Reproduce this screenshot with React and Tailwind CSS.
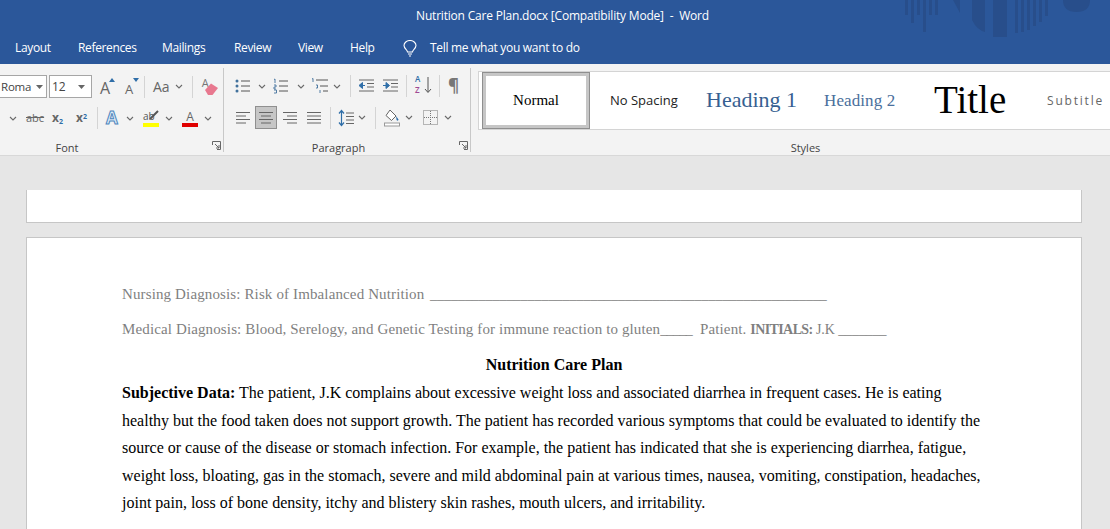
import React from "react";

const ui = { fontFamily: '"Open Sans", "Noto Sans", sans-serif' };
const cambria = { fontFamily: '"Liberation Serif", serif' };

const tabs = [
  ["Layout", "w-[63px]"],
  ["References", "w-[84px]"],
  ["Mailings", "w-[72px]"],
  ["Review", "w-[64px]"],
  ["View", "w-[52px]"],
  ["Help", "w-[53px]"],
];

const Chevron = ({ className = "" }) => (
  <svg width="8" height="5" viewBox="0 0 8 5" className={className}>
    <path d="M1 1l3 3 3-3" fill="none" stroke="#6a6a6a" strokeWidth="1.1" />
  </svg>
);

const Sep = ({ className = "" }) => <div className={`w-px h-[22px] bg-[#d4d4d4] ${className}`} />;

const Launcher = () => (
  <svg width="9" height="9" viewBox="0 0 9 9" className="absolute right-[3px] bottom-[2px]">
    <path d="M.5 4V.5H8.500V8.500H5M3 3l4 4M7 4v3H4" fill="none" stroke="#666" strokeWidth="1" />
  </svg>
);

const Lines = ({ rows }) => (
  <svg width="16" height="14" viewBox="0 0 16 14">
    {rows.map(([x1, x2], i) => (
      <path key={i} d={`M${x1} ${1.5 + i * 3.5}H${x2}`} stroke="#666" strokeWidth="1" />
    ))}
  </svg>
);

const BulletList = () => (
  <svg width="16" height="16" viewBox="0 0 16 16">
    <g fill="#41719c"><circle cx="2" cy="3" r="1.500" /><circle cx="2" cy="8" r="1.500" /><circle cx="2" cy="13" r="1.500" /></g>
    <path d="M6 3h9M6 8h9M6 13h9" stroke="#555" />
  </svg>
);

const NumberList = () => (
  <svg width="16" height="16" viewBox="0 0 16 16">
    <path d="M1 1.500l1-.5v4M1 7h2v2H1v2h2M1 12h2.500v3H1" fill="none" stroke="#41719c" strokeWidth=".9" />
    <path d="M6 3h9M6 8h9M6 13h9" stroke="#555" />
  </svg>
);

const MultiLevel = () => (
  <svg width="18" height="16" viewBox="0 0 18 16">
    <path d="M1 1l1-.5V4M5 7h1.500v3H5M9 12v3" fill="none" stroke="#41719c" strokeWidth=".9" />
    <path d="M5 2h12M9 8h8M12 13h5" stroke="#555" />
  </svg>
);

const Indent = ({ flip }) => (
  <svg width="17" height="14" viewBox="0 0 17 14">
    <path d="M1 1h15M9 4.500h7M9 8h7M1 12h15" stroke="#666" />
    {flip ? (
      <path d="M1 6.500h5M4 3.500l3.500 3-3.500 3z" fill="#2f6ea8" stroke="#2f6ea8" />
    ) : (
      <path d="M7 6.500H3M4.500 3.500L1 6.500l3.500 3z" fill="#2f6ea8" stroke="#2f6ea8" />
    )}
  </svg>
);

const Sort = () => (
  <div className="relative w-[17px] h-[18px]">
    <span style={ui} className="absolute left-0 -top-[2px] text-[8px] leading-[8px] font-semibold text-[#2f6ea8]">A</span>
    <span style={ui} className="absolute left-0 top-[9px] text-[8px] leading-[8px] font-semibold text-[#a04a94]">Z</span>
    <svg width="8" height="17" viewBox="0 0 8 17" className="absolute right-0 top-0">
      <path d="M4 0v15M1 12l3 3.500L7 12" fill="none" stroke="#555" />
    </svg>
  </div>
);

const SpacingIcon = () => (
  <svg width="16" height="18" viewBox="0 0 16 18">
    <path d="M3.500 2v14M1 4.500L3.500 1.500 6 4.500M1 13.500l2.500 3 2.500-3" fill="none" stroke="#2f6ea8" strokeWidth="1.200" />
    <path d="M8 4h8M8 7.500h8M8 11h8M8 14.500h8" stroke="#666" />
  </svg>
);

const Shading = () => (
  <svg width="16" height="18" viewBox="0 0 16 18">
    <path d="M6 1l6 6-4.500 4.500L2 6.500z" fill="#fff" stroke="#666" />
    <path d="M12 7l2.500 3.500c0 1.500-2 1.500-2 0z" fill="#2f6ea8" />
    <rect x=".5" y="14" width="15" height="3" fill="#fff" stroke="#999" />
  </svg>
);

const Borders = () => (
  <svg width="15" height="15" viewBox="0 0 15 15">
    <rect x=".5" y=".5" width="14" height="14" fill="none" stroke="#777" strokeDasharray="1 1" />
    <path d="M7.500 1v13M1 7.500h13" stroke="#777" strokeDasharray="1 1" />
  </svg>
);

const Eraser = () => (
  <div className="relative w-[15px] h-[16px]">
    <span style={ui} className="absolute left-0 -top-[3px] text-[11px] leading-[14px] text-[#777]">A</span>
    <svg width="14" height="12" viewBox="0 0 14 12" className="absolute -right-[1px] bottom-0">
      <path d="M1 7l6-6.500L14 5 8.500 12H4z" fill="#e8788f" />
    </svg>
  </div>
);

const Ribbon = () => (
  <div className="flex h-[92px] shrink-0 bg-[#f3f3f3] border-b border-[#d8d8d8]">
    {/* font group */}
    <div className="relative w-[224px] shrink-0 h-[88px] pt-[11px]" style={ui}>
      <div className="flex items-center h-[23px]">
        <div className="flex items-center justify-between w-[47px] h-[23px] bg-white border border-l-0 border-[#a6a6a6] pl-[1px] pr-[3px] text-[11.500px] tracking-[-0.2px] text-[#444]">
          Roma
          <svg width="7" height="4" viewBox="0 0 7 4" className="shrink-0"><path d="M0 0h7L3.500 4z" fill="#666" /></svg>
        </div>
        <div className="flex items-center justify-between w-[43px] h-[23px] ml-[2px] bg-white border border-[#a6a6a6] pl-[2px] pr-[6px] text-[12px] text-[#444]">
          12
          <svg width="7" height="4" viewBox="0 0 7 4"><path d="M0 0h7L3.500 4z" fill="#666" /></svg>
        </div>
        <div className="relative w-[14px] h-[18px] ml-[8px] text-[16px] leading-[20px] text-[#666]">
          A
          <svg width="6" height="4" viewBox="0 0 6 4" className="absolute -right-[1px] top-0"><path d="M0 4h6L3 0z" fill="#2f6ea8" /></svg>
        </div>
        <div className="relative w-[13px] h-[18px] ml-[11px] text-[13px] leading-[22px] text-[#666]">
          A
          <svg width="6" height="4" viewBox="0 0 6 4" className="absolute -right-[1px] top-0"><path d="M0 0h6L3 4z" fill="#2f6ea8" /></svg>
        </div>
        <Sep className="ml-[6px]" />
        <span className="ml-[8px] text-[14px] text-[#666]">Aa</span>
        <Chevron className="ml-[5px]" />
        <Sep className="ml-[9px]" />
        <div className="ml-[9px]"><Eraser /></div>
      </div>
      <div className="flex items-center h-[22px] mt-[9px]">
        <Chevron className="ml-[9px]" />
        <span className="ml-[9px] w-[17px] text-[11px] text-[#666] line-through">abc</span>
        <span className="ml-[9px] w-[13px] text-[12px] font-bold text-[#666]">x<sub className="text-[7px] text-[#2f6ea8]">2</sub></span>
        <span className="ml-[11px] w-[13px] text-[12px] font-bold text-[#666]">x<sup className="text-[7px] text-[#2f6ea8]">2</sup></span>
        <Sep className="ml-[8px]" />
        <span className="ml-[8px] w-[15px] text-[17px] font-bold leading-[20px] text-[#dcebf7] [-webkit-text-stroke:1px_#4f86bd]">A</span>
        <Chevron className="ml-[5px]" />
        <div className="relative ml-[9px] w-[16px] flex flex-col items-center">
          <span className="self-start text-[10px] leading-[12px] text-[#555]">ab</span>
          <svg width="10" height="10" viewBox="0 0 10 10" className="absolute right-0 top-0"><path d="M1 9l8-8" stroke="#555" strokeWidth="2" /></svg>
          <div className="w-[16px] h-[4px] bg-[#ffff00] mt-[1px]" />
        </div>
        <Chevron className="ml-[6px]" />
        <div className="ml-[9px] w-[16px] flex flex-col items-center">
          <span className="text-[12px] leading-[13px] text-[#666]">A</span>
          <div className="w-[16px] h-[4px] bg-[#e00000]" />
        </div>
        <Chevron className="ml-[6px]" />
      </div>
      <div className="absolute left-0 w-[134px] top-[77px] text-center text-[11px] leading-[14px] text-[#444]">Font</div>
      <Launcher />
      <div className="absolute right-0 top-[4px] bottom-0 w-px bg-[#c8c8c8]" />
    </div>

    {/* paragraph group */}
    <div className="relative w-[247px] shrink-0 h-[88px] pl-[11px] pt-[11px]" style={ui}>
      <div className="flex items-center h-[22px]">
        <BulletList />
        <Chevron className="ml-[7px]" />
        <div className="ml-[7px]"><NumberList /></div>
        <Chevron className="ml-[8px]" />
        <div className="ml-[6px]"><MultiLevel /></div>
        <Chevron className="ml-[4px]" />
        <Sep className="ml-[9px]" />
        <div className="ml-[7px]"><Indent /></div>
        <div className="ml-[7px]"><Indent flip /></div>
        <Sep className="ml-[7px]" />
        <div className="ml-[8px]"><Sort /></div>
        <Sep className="ml-[7px]" />
        <span className="ml-[8px] text-[17px] font-bold leading-[20px] text-[#777]">¶</span>
      </div>
      <div className="flex items-center h-[23px] mt-[9px]">
        <Lines rows={[[1, 15], [1, 11], [1, 15], [1, 11]]} />
        <div className="flex items-center justify-center w-[22px] h-[23px] ml-[4px] bg-[#c6c6c6] border border-[#8f8f8f]">
          <Lines rows={[[1, 15], [3, 13], [1, 15], [3, 13]]} />
        </div>
        <div className="ml-[5px]"><Lines rows={[[1, 15], [5, 15], [1, 15], [5, 15]]} /></div>
        <div className="ml-[8px]"><Lines rows={[[1, 15], [1, 15], [1, 15], [1, 15]]} /></div>
        <Sep className="ml-[8px]" />
        <div className="ml-[7px]"><SpacingIcon /></div>
        <Chevron className="ml-[4px]" />
        <Sep className="ml-[9px]" />
        <div className="ml-[8px]"><Shading /></div>
        <Chevron className="ml-[5px]" />
        <div className="ml-[10px]"><Borders /></div>
        <Chevron className="ml-[6px]" />
      </div>
      <div className="absolute left-0 w-[229px] top-[77px] text-center text-[11px] leading-[14px] text-[#444]">Paragraph</div>
      <Launcher />
      <div className="absolute right-0 top-[4px] bottom-0 w-px bg-[#c8c8c8]" />
    </div>

    {/* styles group */}
    <div className="relative flex-1 h-[88px] pl-[7px]" style={ui}>
      <div className="flex items-center h-[59px] mt-[7px] bg-white border border-r-0 border-[#d4d4d4] overflow-hidden">
        <div className="flex items-center justify-center w-[108px] h-[57px] ml-[3px] border border-[#8f8f8f] shrink-0">
          <div className="flex items-center justify-center w-full h-full border-[3px] border-[#c6c6c6] text-[15px] text-black" style={cambria}>Normal</div>
        </div>
        <span className="ml-[20px] w-[96px] shrink-0 text-[13px] text-[#222]">No Spacing</span>
        <span className="w-[118px] shrink-0 pb-[2px] text-[22px] text-[#365f91]" style={cambria}>Heading 1</span>
        <span className="w-[110px] shrink-0 text-[17px] tracking-[0.1px] text-[#4a6f9c]" style={cambria}>Heading 2</span>
        <span className="w-[113px] shrink-0 text-[39px] text-black" style={cambria}>Title</span>
        <span className="shrink-0 text-[12px] tracking-[1.800px] text-[#666]">Subtitle</span>
      </div>
      <div className="absolute left-0 w-[669px] top-[77px] text-center text-[11px] leading-[14px] text-[#444]">Styles</div>
    </div>
  </div>
);

export default function App() {
  return (
    <div className="w-[1110px] h-[529px] overflow-hidden bg-[#e6e6e6] flex flex-col">
      <div className="relative bg-[#2b579a] h-[64px] shrink-0" style={ui}>
        <svg width="210" height="38" viewBox="0 0 210 38" className="absolute left-[900px] top-0">
          <g fill="#284e8b">
            <path d="M5 0h3v15H5zM11 0h3v23h-3zM17 0h3v15h-3zM23 0h3v32h-3zM29 0h3v15h-3zM35 0h3v15h-3z" />
            <path d="M53 0h7v13zM72 0h13v32q-8-2-13-12zM93 0h14v37H93zM115 0h3v33h-3zM121 0h3v32h-3zM127 0h3v30h-3zM133 0h3v26h-3zM139 0h3v22h-3zM145 0h3v16h-3z" />
            <path d="M163 0h27q0 12-13.500 12T163 0z" />
          </g>
        </svg>
        <div className="relative flex items-center justify-center h-[32px] pl-[15px] text-[12px] tracking-[-0.2px] text-white">
          Nutrition Care Plan.docx [Compatibility Mode]&nbsp; -&nbsp; Word
        </div>
        <div className="relative flex items-center h-[32px] pl-[15px] text-[12px] tracking-[-0.35px] text-white">
          {tabs.map(([name, w]) => (
            <span key={name} className={`${w} shrink-0`}>{name}</span>
          ))}
          <svg width="14" height="17" viewBox="0 0 14 17" className="mr-[13px]">
            <path d="M4.500 12c0-2-3.500-3.500-3.500-6.500a6 5 0 0 1 12 0c0 3-3.500 4.500-3.500 6.500zM5 14h4M6 16h2" fill="none" stroke="#fff" strokeWidth="1.100" />
          </svg>
          <span className="tracking-[-0.3px]">Tell me what you want to do</span>
        </div>
      </div>

      <Ribbon />

      <main className="flex-1 min-h-0 pl-[26px] pt-[34px]">
        <div className="w-[1056px] h-[33px] bg-white border-x border-b border-[#c6c6c6]" />
        <div className="w-[1056px] h-[400px] mt-[14px] bg-white border border-[#c6c6c6] pl-[95px] pt-[47px]">
          <p className="h-[18px] text-[15px] tracking-[0.13px] leading-[18px] text-[#7f7f7f] whitespace-pre" style={cambria}>
            {"Nursing Diagnosis: Risk of Imbalanced Nutrition  "}
            <span className="-ml-[2px] text-[14px] tracking-[-0.04px]">_________________________________________________________</span>
          </p>
          <p className="h-[18px] mt-[17px] text-[15px] tracking-[0.13px] leading-[18px] text-[#7f7f7f] whitespace-pre" style={cambria}>
            {"Medical Diagnosis: Blood, Serelogy, and Genetic Testing for immune reaction to gluten"}
            <span className="text-[14px] tracking-[-0.6px]">_____</span>
            {"  Patient. "}
            <b className="text-[14px] tracking-[-0.6px]">INITIALS:</b>
            <span className="text-[14px] tracking-[-0.1px]">{" J.K _______"}</span>
          </p>
          <h1 className="w-[864px] mt-[17px] text-center text-[16px] leading-[20px] font-bold text-black" style={cambria}>
            Nutrition Care Plan
          </h1>
          <p className="w-[870px] mt-[4px] text-[16px] leading-[27.500px] text-black whitespace-nowrap" style={cambria}>
            <b>Subjective Data:</b> The patient, J.K complains about excessive weight loss and associated diarrhea in frequent cases. He is eating<br />
            healthy but the food taken does not support growth. The patient has recorded various symptoms that could be evaluated to identify the<br />
            source or cause of the disease or stomach infection. For example, the patient has indicated that she is experiencing diarrhea, fatigue,<br />
            weight loss, bloating, gas in the stomach, severe and mild abdominal pain at various times, nausea, vomiting, constipation, headaches,<br />
            joint pain, loss of bone density, itchy and blistery skin rashes, mouth ulcers, and irritability.
          </p>
        </div>
      </main>
    </div>
  );
}
